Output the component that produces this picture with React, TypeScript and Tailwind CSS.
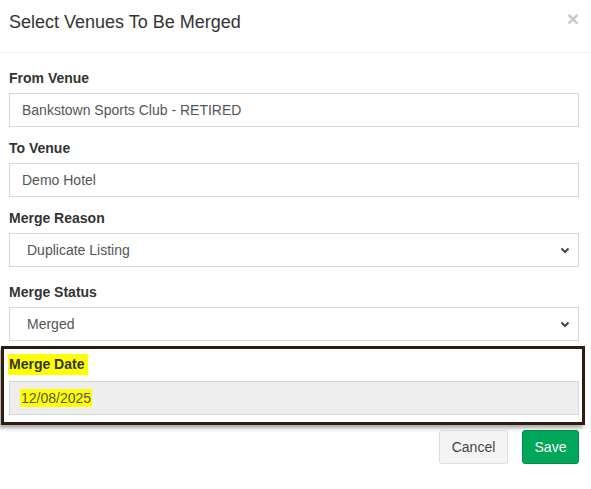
import React from "react";

function Chevron() {
  return (
    <svg width="10" height="7" viewBox="0 0 10 7" className="ml-auto mr-[3px]">
      <path d="M1.5 1.5 L5 5 L8.5 1.5" fill="none" stroke="#444" strokeWidth="2" />
    </svg>
  );
}

function Label({ children, className = "" }: { children: React.ReactNode; className?: string }) {
  return (
    <div className={"text-[14px] leading-[16px] font-bold text-[#333] h-[16px] " + className}>{children}</div>
  );
}

function Field({ children, select = false, className = "" }: { children: React.ReactNode; select?: boolean; className?: string }) {
  return (
    <div
      className={
        "h-[34px] border border-[#d2d6de] flex items-center text-[14px] text-[#555] " +
        (select ? "pl-[17px] pr-[5px] " : "pl-[12px] ") +
        className
      }
    >
      <span>{children}</span>
      {select && <Chevron />}
    </div>
  );
}

export default function App() {
  return (
    <div className="w-[591px] h-[489px] bg-white overflow-hidden" style={{ fontFamily: '"Liberation Sans", Arial, sans-serif' }}>
      <div className="h-[53px] border-b border-[#f0f0f0] flex items-start relative">
        <div className="pl-[9px] pt-[10px] text-[18px] leading-[24px] text-[#333]">Select Venues To Be Merged</div>
        <div className="absolute right-[12px] top-[7px] text-[21px] leading-[24px] font-bold text-[#c8c8c8]">×</div>
      </div>
      <div className="pl-[9px] pr-[12px] pt-[17px]">
        <Label className="mb-[7px]">From Venue</Label>
        <Field className="mb-[13px]">Bankstown Sports Club - RETIRED</Field>
        <Label className="mb-[7px]">To Venue</Label>
        <Field className="mb-[13px]">Demo Hotel</Field>
        <Label className="mb-[7px]">Merge Reason</Label>
        <Field select className="mb-[17px]">Duplicate Listing</Field>
        <Label className="mb-[7px]">Merge Status</Label>
        <Field select>Merged</Field>
      </div>
      <div className="ml-[1px] w-[584px] mt-[5px] border-[3px] border-[#2e1c0c] shadow-[-2px_3px_4px_rgba(0,0,0,0.35)] pt-[5px] pb-[7px] pl-[5px] pr-[3px]">
        <div className="flex">
          <div className="bg-[#ffff00] h-[21px] pl-[1px] pr-[4px] flex items-center text-[14px] font-bold text-[#333] -ml-[1px]">Merge Date</div>
        </div>
        <div className="mt-[6px] h-[34px] border border-[#d2d6de] bg-[#eeeeee] flex items-center pl-[10px] text-[14px] text-[#555]">
          <span className="bg-[#ffff00] h-[18px] flex items-center px-[1px]">12/08/2025</span>
        </div>
      </div>
      <div className="flex justify-end gap-[14px] pr-[12px] mt-[5px]">
        <div className="h-[34px] w-[69px] border border-[#ddd] bg-[#f4f4f4] rounded-[3px] flex items-center justify-center text-[14px] text-[#444]">Cancel</div>
        <div className="h-[34px] w-[57px] border border-[#008d4c] bg-[#00a65a] rounded-[3px] flex items-center justify-center text-[14px] text-white">Save</div>
      </div>
    </div>
  );
}
